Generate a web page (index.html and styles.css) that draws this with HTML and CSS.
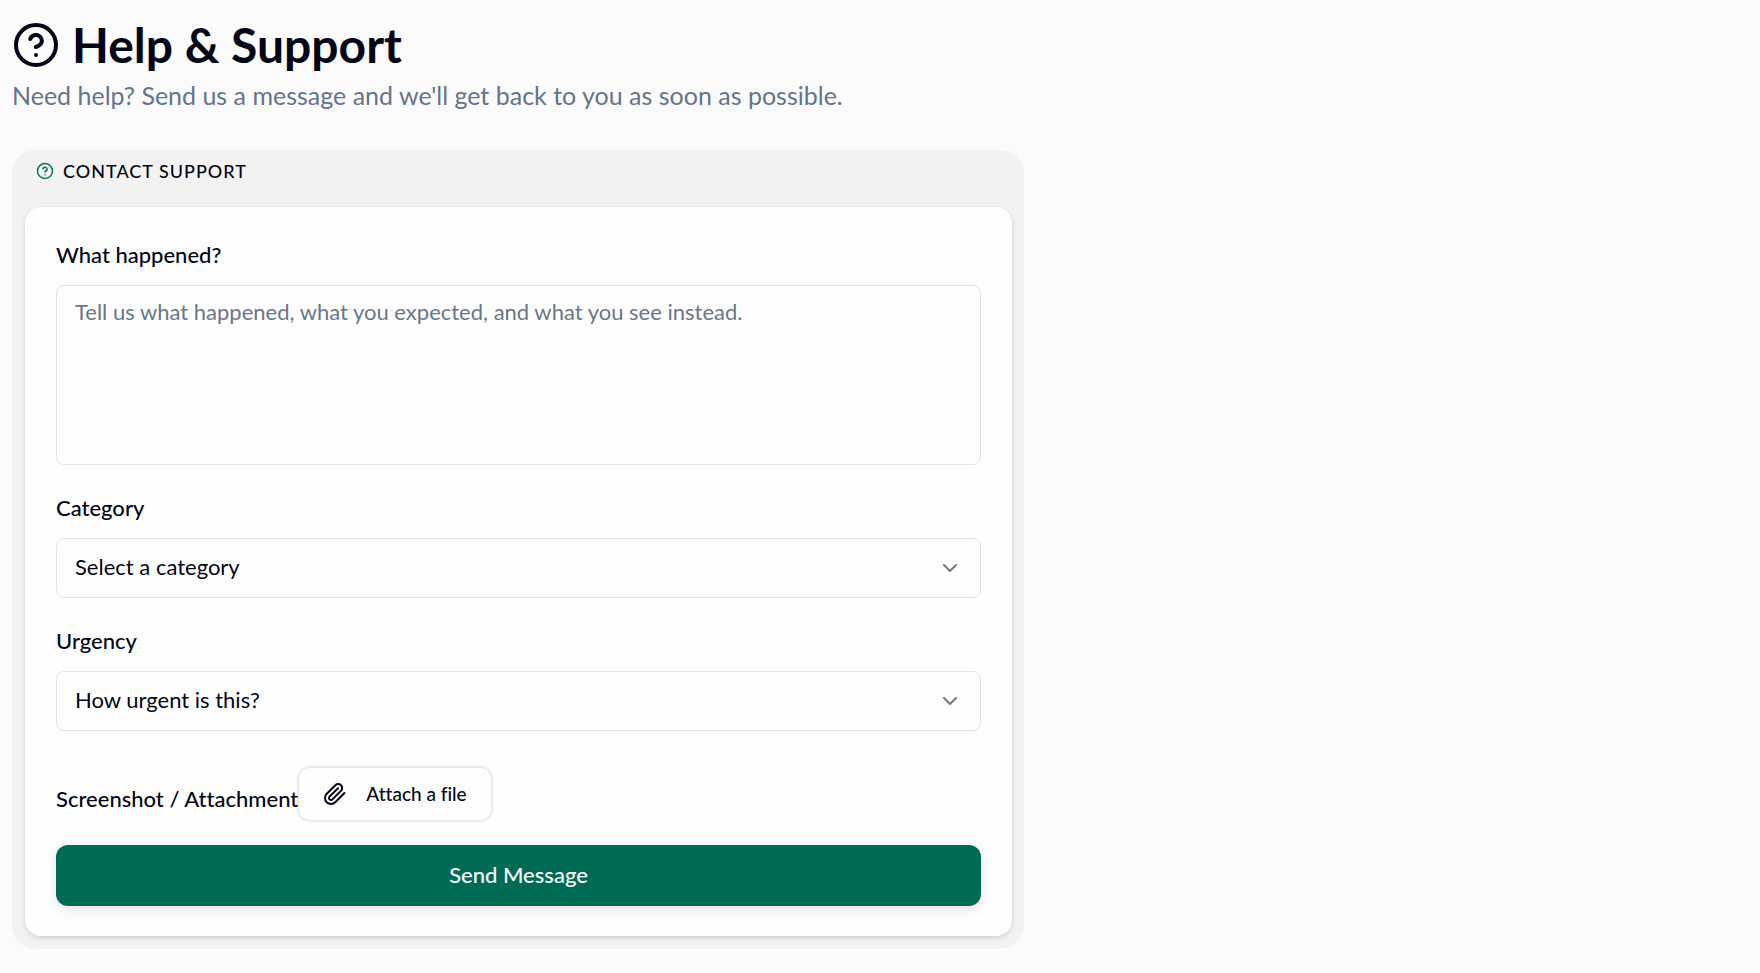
FILE: index.html
```html
<!DOCTYPE html>
<html lang="en">

<head>
    <meta charset="UTF-8">
    <meta name="viewport" content="width=device-width, initial-scale=1.0">
    <title>Help &amp; Support</title>
    <link rel="stylesheet" href="styles.css">
</head>

<body>
    <main class="page">
        <header class="page-header">
            <h1 class="page-title">
                <svg class="title-icon" viewBox="0 0 24 24" aria-hidden="true">
                    <circle cx="12" cy="12" r="10" />
                    <path d="M9.09 9a3 3 0 0 1 5.83 1c0 2-3 3-3 3" />
                    <path d="M12 17h.01" />
                </svg>
                Help &amp; Support
            </h1>
            <p class="page-subtitle">Need help? Send us a message and we'll get back to you as soon as possible.</p>
        </header>

        <section class="panel">
            <h2 class="panel-title">
                <svg class="panel-icon" viewBox="0 0 24 24" aria-hidden="true">
                    <circle cx="12" cy="12" r="10" />
                    <path d="M9.09 9a3 3 0 0 1 5.83 1c0 2-3 3-3 3" />
                    <path d="M12 17h.01" />
                </svg>
                Contact Support
            </h2>

            <form class="card">
                <div class="field">
                    <label for="message">What happened?</label>
                    <textarea id="message" class="control message" placeholder="Tell us what happened, what you expected, and what you see instead."></textarea>
                </div>

                <div class="field">
                    <label for="category">Category</label>
                    <div class="select-wrap">
                        <select id="category" class="control">
                            <option>Select a category</option>
                        </select>
                        <svg class="chevron" viewBox="0 0 24 24" aria-hidden="true">
                            <path d="m6 9 6 6 6-6" />
                        </svg>
                    </div>
                </div>

                <div class="field">
                    <label for="urgency">Urgency</label>
                    <div class="select-wrap">
                        <select id="urgency" class="control">
                            <option>How urgent is this?</option>
                        </select>
                        <svg class="chevron" viewBox="0 0 24 24" aria-hidden="true">
                            <path d="m6 9 6 6 6-6" />
                        </svg>
                    </div>
                </div>

                <div class="attach-row">
                    <label for="attach">Screenshot / Attachment</label>
                    <button id="attach" class="attach-btn" type="button">
                        <svg class="clip" viewBox="0 0 24 24" aria-hidden="true">
                            <path d="m21.44 11.05-9.19 9.19a6 6 0 0 1-8.49-8.49l8.57-8.57A4 4 0 1 1 18 8.84l-8.59 8.57a2 2 0 0 1-2.83-2.83l8.49-8.48" />
                        </svg>
                        Attach a file
                    </button>
                </div>

                <button class="send-btn" type="submit">Send Message</button>
            </form>
        </section>
    </main>
</body>

</html>
```

FILE: styles.css
```css
* {
    box-sizing: border-box;
    margin: 0;
    padding: 0;
}

body {
    background: #fbfbfb;
    color: #020617;
    font-family: Lato, "Liberation Sans", sans-serif;
    font-size: 22px;
    font-variant-ligatures: none;
    line-height: 32px;
}

svg {
    flex: none;
    fill: none;
    stroke: currentColor;
    stroke-width: 2;
    stroke-linecap: round;
    stroke-linejoin: round;
}

.page {
    max-width: 1036px;
    padding: 17px 12px 24px;
}

.page-header {
    margin-bottom: 39px;
}

.page-title {
    display: flex;
    align-items: center;
    gap: 12px;
    font-size: 48px;
    font-weight: 700;
    line-height: 56px;
}

.title-icon {
    width: 48px;
    height: 48px;
}

.page-subtitle {
    margin-top: 6px;
    color: #64748b;
    font-size: 25px;
}

.panel {
    padding: 0 12px 13px 13px;
    border-radius: 24px;
    background: #f2f2f2;
}

.panel-title {
    display: flex;
    align-items: center;
    gap: 9px;
    height: 57px;
    padding: 0 11px 15px;
    font-size: 18px;
    font-weight: 500;
    letter-spacing: 1px;
    text-transform: uppercase;
}

.panel-icon {
    width: 18px;
    height: 18px;
    color: #047857;
}

.card {
    display: flex;
    flex-direction: column;
    gap: 24px;
    padding: 32px 31px 30px;
    border-radius: 16px;
    background: #fefefe;
    box-shadow: 0 2px 5px rgba(0, 0, 0, 0.14);
}

.field {
    display: flex;
    flex-direction: column;
    gap: 14px;
    margin-bottom: 3px;
}

label {
    font-weight: 500;
}

.control {
    display: block;
    width: 100%;
    height: 60px;
    padding: 0 18px 2px;
    border: 1px solid #dfe5e9;
    border-radius: 8px;
    background: transparent;
    color: inherit;
    font: inherit;
    appearance: none;
}

.message {
    height: 180px;
    padding: 10px 18px;
    resize: none;
}

.message::placeholder {
    color: #697787;
}

.select-wrap {
    position: relative;
}

.chevron {
    position: absolute;
    top: 18px;
    right: 19px;
    width: 24px;
    height: 24px;
    color: #777;
    pointer-events: none;
}

.attach-row {
    display: flex;
    align-items: center;
    padding-top: 9px;
}

.attach-row label {
    padding-top: 10px;
}

.attach-btn {
    display: flex;
    align-items: center;
    gap: 19px;
    height: 54px;
    padding: 0 24px;
    border: 1px solid #e2e8ea;
    border-radius: 12px;
    background: #fefefe;
    box-shadow: 0 0 3px rgba(0, 0, 0, 0.16);
    color: inherit;
    font: inherit;
    font-size: 19px;
    font-weight: 500;
}

.clip {
    width: 24px;
    height: 24px;
}

.send-btn {
    height: 61px;
    padding-bottom: 2px;
    border: 0;
    border-radius: 12px;
    background: #006b55;
    box-shadow: 0 4px 12px rgba(0, 0, 0, 0.1);
    color: #fff;
    font: inherit;
    font-weight: 500;
}
```
